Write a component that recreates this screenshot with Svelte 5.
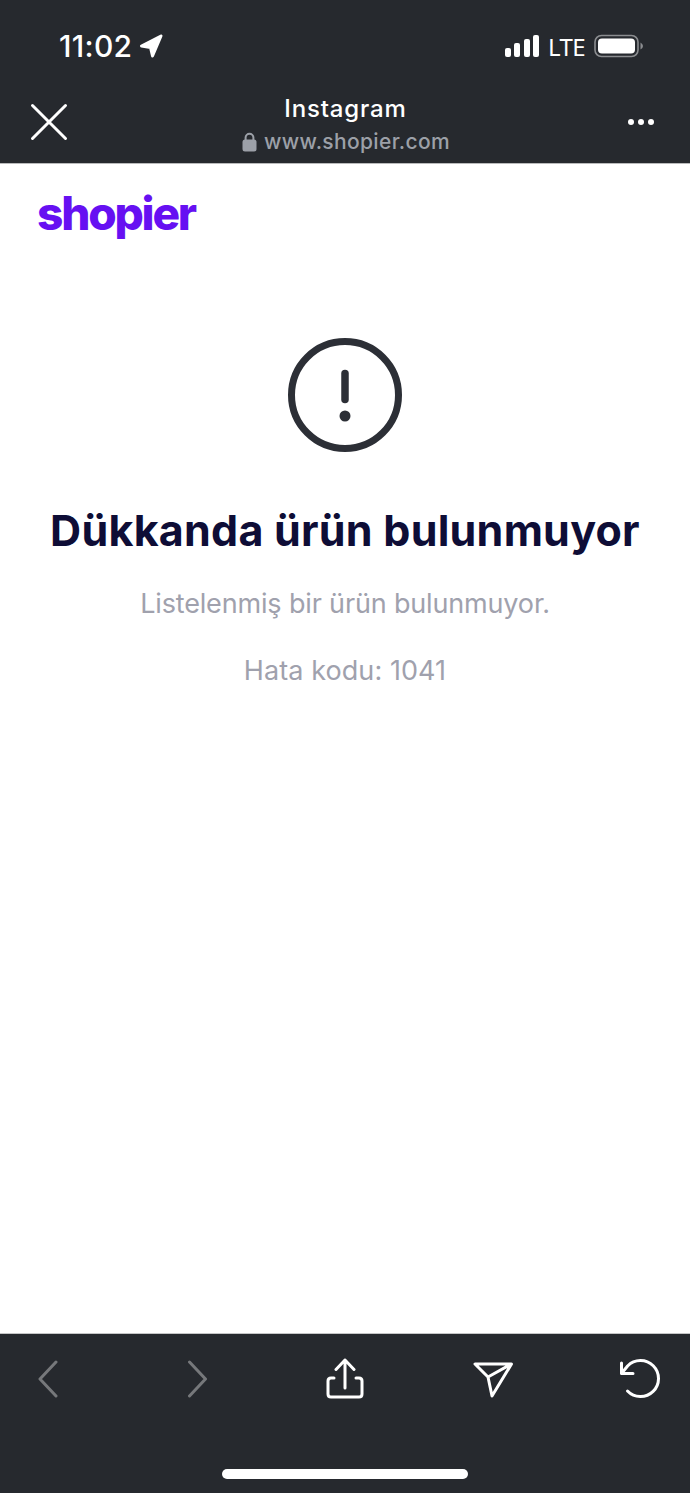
<script>
	const title = 'Dükkanda ürün bulunmuyor';
	const message = 'Listelenmiş bir ürün bulunmuyor.';
	const errorCode = 1041;
</script>

<div class="page">
	<header class="top">
		<div class="status">
			<div class="clock">
				<span>11:02</span>
				<svg width="24" height="24" viewBox="0 0 24 24"><path d="M22 2 L2.5 12 L11.5 13.5 L13.5 22 Z" fill="#fff" stroke="#fff" stroke-width="3" stroke-linejoin="round" /></svg>
			</div>
			<div class="indicators">
				<div class="bars">
					<i style="height: 9px"></i>
					<i style="height: 14px"></i>
					<i style="height: 18px"></i>
					<i style="height: 22px"></i>
				</div>
				<span class="lte">LTE</span>
				<svg width="50" height="24" viewBox="0 0 50 24">
					<rect x="1" y="1.5" width="43" height="21" rx="6.5" fill="none" stroke="#8b8d90" stroke-width="1.6" />
					<rect x="4" y="4.5" width="37" height="15" rx="4" fill="#fff" />
					<path d="M46.5 8.5 Q49 10 49 12 Q49 14 46.5 15.5 Z" fill="#8b8d90" />
				</svg>
			</div>
		</div>
		<div class="browser">
			<svg class="close" width="38" height="38" viewBox="0 0 38 38"><path d="M2.5 2.5 L35.5 35.5 M35.5 2.5 L2.5 35.5" stroke="#fff" stroke-width="3" stroke-linecap="round" /></svg>
			<div class="address">
				<div class="site">Instagram</div>
				<div class="url">
					<svg width="15" height="20" viewBox="0 0 15 20"><path d="M3.6 8 V5.6 a3.9 3.9 0 0 1 7.8 0 V8" fill="none" stroke="#9ca0a8" stroke-width="2" /><rect x="0.5" y="7.5" width="14" height="12" rx="2.5" fill="#9ca0a8" /></svg>
					<span>www.shopier.com</span>
				</div>
			</div>
			<div class="more"><i></i><i></i><i></i></div>
		</div>
	</header>

	<main class="content">
		<div class="logo">shopier</div>
		<div class="notice">
			<svg width="114" height="114" viewBox="0 0 114 114">
				<circle cx="57" cy="57" r="53.5" fill="none" stroke="#2c2f36" stroke-width="7" />
				<path d="M57 35.5 V61.5" stroke="#2c2f36" stroke-width="7.5" stroke-linecap="round" />
				<circle cx="57" cy="78" r="5.5" fill="#2c2f36" />
			</svg>
			<h1>{title}</h1>
			<p class="message">{message}</p>
			<p class="code">Hata kodu: {errorCode}</p>
		</div>
	</main>

	<footer class="bottom">
		<nav class="tools">
			<div class="tool"><svg width="22" height="38" viewBox="0 0 22 38"><path d="M18 2 L2 19 L18 36" fill="none" stroke="#76787b" stroke-width="3" stroke-linecap="round" stroke-linejoin="round" /></svg></div>
			<div class="tool"><svg width="22" height="38" viewBox="0 0 22 38"><path d="M3.5 2 L19.5 19 L3.5 36" fill="none" stroke="#76787b" stroke-width="3" stroke-linecap="round" stroke-linejoin="round" /></svg></div>
			<div class="tool"><svg width="38" height="42" viewBox="0 0 38 42"><path d="M8 20 H5 Q2 20 2 23 V36 Q2 39 5 39 H33 Q36 39 36 36 V23 Q36 20 33 20 H30 M19 30 V2 M10 11.5 L19 2 L28 11.5" fill="none" stroke="#fff" stroke-width="3" stroke-linecap="round" stroke-linejoin="round" /></svg></div>
			<div class="tool"><svg width="42" height="38" viewBox="0 0 42 38"><path d="M4 4 H40.5 L21 36 L17 17 Z M17 17 L40.5 4" fill="none" stroke="#fff" stroke-width="3" stroke-linejoin="round" /></svg></div>
			<div class="tool"><svg width="42" height="42" viewBox="0 0 42 42"><path d="M8.5 33 A18 18 0 1 0 8.6 8 L2.5 15.5 M2.5 5 V15.5 H14" fill="none" stroke="#fff" stroke-width="3" stroke-linecap="round" stroke-linejoin="round" /></svg></div>
		</nav>
		<div class="home"></div>
	</footer>
</div>

<style>
	:global(body) {
		background: #fff;
	}

	.page {
		display: flex;
		flex-direction: column;
		height: 1493px;
		font-family: Inter, 'Noto Sans', sans-serif;
	}

	.top {
		height: 164px;
		box-sizing: border-box;
		background: #26292e;
		color: #fff;
		border-bottom: 1px solid #b9babb;
	}

	.status {
		display: flex;
		justify-content: space-between;
		align-items: center;
		height: 34px;
		padding: 29px 46px 0 59px;
	}

	.clock {
		display: flex;
		align-items: center;
		gap: 7px;
		font-size: 30px;
		font-weight: 500;
		letter-spacing: 0.3px;
	}

	.indicators {
		display: flex;
		align-items: center;
		gap: 9px;
	}

	.bars {
		display: flex;
		align-items: flex-end;
		gap: 3.5px;
	}

	.bars i {
		display: block;
		width: 6px;
		border-radius: 2px;
		background: #fff;
	}

	.lte {
		font-family: 'Noto Sans', sans-serif;
		font-size: 24px;
		font-weight: 400;
		letter-spacing: -0.6px;
	}

	.browser {
		display: grid;
		grid-template-columns: 1fr auto 1fr;
		align-items: start;
		padding: 32px 30px 0;
	}

	.close {
		margin-top: 8px;
	}

	.address {
		margin-left: 2px;
		text-align: center;
	}

	.site {
		margin-left: -1px;
		font-size: 24px;
		font-weight: 500;
		line-height: 28px;
		letter-spacing: 0.85px;
	}

	.url {
		display: flex;
		align-items: center;
		gap: 7px;
		margin-top: 5px;
		font-size: 21px;
		font-weight: 500;
		line-height: 28px;
		letter-spacing: 0.35px;
		color: #9ca0a8;
	}

	.more {
		display: flex;
		justify-self: end;
		gap: 4px;
		margin: 24px 6px 0 0;
	}

	.more i {
		display: block;
		width: 6px;
		height: 6px;
		border-radius: 50%;
		background: #fff;
	}

	.content {
		flex: 1;
		padding: 0 38px;
	}

	.logo {
		margin: 21px 0 0 -1px;
		font-size: 46px;
		font-weight: 800;
		line-height: 56px;
		letter-spacing: -2.2px;
		color: #6610f2;
	}

	.notice {
		display: flex;
		flex-direction: column;
		align-items: center;
		margin-top: 97px;
	}

	h1 {
		margin: 50px 0 0;
		font-size: 43px;
		font-weight: 700;
		line-height: 56px;
		letter-spacing: 0.25px;
		white-space: nowrap;
		color: #0e0d36;
	}

	p {
		margin: 0;
		font-size: 27px;
		line-height: 34px;
		color: #a0a1ad;
	}

	.message {
		margin-top: 29px;
		letter-spacing: -0.16px;
	}

	.code {
		margin-top: 33px;
		letter-spacing: 0.08px;
	}

	.bottom {
		height: 160px;
		box-sizing: border-box;
		background: #26292e;
		border-top: 1px solid #c4c5c6;
	}

	.tools {
		display: flex;
		justify-content: space-between;
		align-items: center;
		height: 42px;
		padding: 24px 29px 0 28px;
	}

	.tool {
		display: flex;
		justify-content: center;
		width: 42px;
	}

	.home {
		width: 246px;
		height: 10px;
		margin: 69px auto 0;
		border-radius: 5px;
		background: #fff;
	}
</style>
